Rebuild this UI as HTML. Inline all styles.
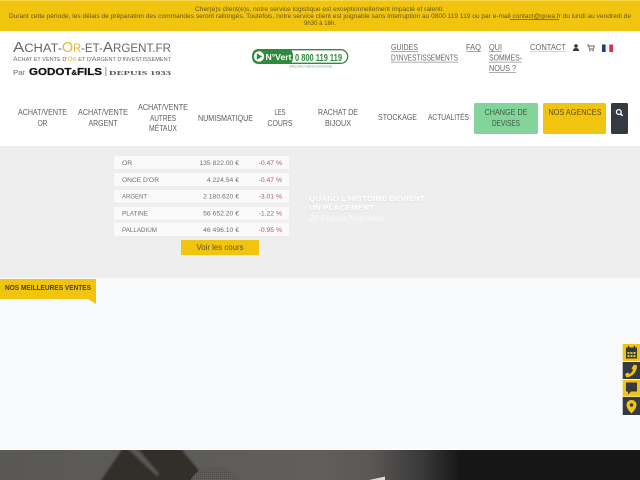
<!DOCTYPE html>
<html lang="fr">
<head>
<meta charset="utf-8">
<title>Achat-Or-et-Argent.fr</title>
<style>
html,body{margin:0;padding:0;width:640px;height:480px;overflow:hidden;background:#fff}
svg{display:block;filter:blur(.35px)}
text{font-family:"Liberation Sans",sans-serif;white-space:pre}
.nav{font-size:8.6px;fill:#5c5c5c}
.top{font-size:6.2px;fill:#63581a}
.lnk{font-size:8.4px;fill:#666}
.row{font-size:6.8px;fill:#707070}
.pct{font-size:6.8px;fill:#b5566a}
</style>
</head>
<body>
<svg xmlns="http://www.w3.org/2000/svg" width="640" height="480" viewBox="0 0 640 480">
<defs>
<linearGradient id="ph" x1="0" x2="1" y1="0" y2="0">
<stop offset="0" stop-color="#5a5855"/><stop offset=".5" stop-color="#615e5b"/><stop offset=".58" stop-color="#5a5755"/><stop offset=".66" stop-color="#393939"/><stop offset=".72" stop-color="#161616"/><stop offset="1" stop-color="#161616"/>
</linearGradient>
<filter id="sh" x="-10%" y="-50%" width="120%" height="200%"><feGaussianBlur stdDeviation="1.2"/></filter>
<filter id="soft" x="-10%" y="-10%" width="120%" height="120%"><feGaussianBlur stdDeviation="1"/></filter>
<clipPath id="phc"><rect x="0" y="450" width="640" height="30"/></clipPath>
<pattern id="dots" width="2" height="2" patternUnits="userSpaceOnUse"><rect width="2" height="2" fill="#5f5d5b"/><rect width="1" height="1" fill="#4e4d4b"/></pattern>
</defs>

<!-- top notice -->
<rect width="640" height="31" fill="#f1c40f"/>
<rect width="640" height="1" fill="#f7d84a"/>
<text class="top" x="195" y="11" textLength="249" lengthAdjust="spacingAndGlyphs">Cher(e)s client(e)s, notre service logistique est exceptionnellement impacté et ralenti.</text>
<text class="top" x="9" y="18" textLength="622" lengthAdjust="spacingAndGlyphs">Durant cette période, les délais de préparation des commandes seront rallongés. Toutefois, notre service client est joignable sans interruption au 0800 119 119 ou par e-mail contact@goea.fr du lundi au vendredi de</text>
<rect x="510" y="19" width="49" height=".7" fill="#5a4f12"/>
<text class="top" x="304" y="25" textLength="32" lengthAdjust="spacingAndGlyphs">9h30 à 18h.</text>

<!-- logo -->
<text x="13" y="52" font-size="15" fill="#666" textLength="49" lengthAdjust="spacingAndGlyphs">A<tspan font-size="11.5">CHAT-</tspan></text>
<text x="62" y="52" font-size="15" fill="#e0b92c" textLength="19" lengthAdjust="spacingAndGlyphs">O<tspan font-size="11.5">R</tspan></text>
<text x="81" y="52" font-size="15" fill="#666" textLength="90" lengthAdjust="spacingAndGlyphs"><tspan font-size="11.5">-ET-</tspan>A<tspan font-size="11.5">RGENT.FR</tspan></text>
<text x="13" y="61" font-size="6.6" fill="#666" textLength="158" lengthAdjust="spacingAndGlyphs">A<tspan font-size="5.4">CHAT ET VENTE D'</tspan><tspan fill="#e0b92c">O<tspan font-size="5.4">R</tspan></tspan><tspan font-size="5.4"> ET D'</tspan>A<tspan font-size="5.4">RGENT D'INVESTISSEMENT</tspan></text>
<text x="13" y="75" font-size="7.5" fill="#666" textLength="12" lengthAdjust="spacingAndGlyphs">Par</text>
<text x="29" y="75" font-size="10.5" font-weight="700" fill="#111" stroke="#111" stroke-width=".25" textLength="73" lengthAdjust="spacingAndGlyphs">GODOT<tspan font-size="7">&amp;</tspan>FILS</text>
<rect x="105.500" y="67" width=".8" height="9" fill="#777"/>
<text x="109" y="75" font-size="6" font-weight="700" fill="#555" style='font-family:"Liberation Serif",serif' textLength="62" lengthAdjust="spacingAndGlyphs">DEPUIS 1933</text>

<!-- N° Vert -->
<rect x="252.700" y="49.700" width="95" height="13.600" rx="6.800" fill="#fff" stroke="#2f8a3c" stroke-width="1.300"/>
<path d="M259 49h29q5 0 5 7.500t-5 7.500h-29q-7 0-7-7.500t7-7.500z" fill="#2f8a3c"/>
<circle cx="259" cy="56.500" r="5.200" fill="#fff"/>
<path d="M256.800 53.300l5.400 3.200-5.400 3.200z" fill="#2f8a3c"/>
<text x="265.500" y="60" font-size="8.500" font-weight="700" fill="#fff" textLength="26" lengthAdjust="spacingAndGlyphs">N°Vert</text>
<text x="295" y="60.800" font-size="10.500" font-weight="700" fill="#2f8a3c" textLength="47" lengthAdjust="spacingAndGlyphs">0 800 119 119</text>
<text x="289" y="67.500" font-size="2.800" fill="#4a9a55" textLength="43" lengthAdjust="spacingAndGlyphs">APPEL GRATUIT DEPUIS UN POSTE FIXE</text>

<!-- top links -->
<text class="lnk" x="391" y="50" textLength="27" lengthAdjust="spacingAndGlyphs">GUIDES</text>
<rect x="391" y="51.300" width="27" height=".6" fill="#777"/>
<text class="lnk" x="391" y="60.500" textLength="67" lengthAdjust="spacingAndGlyphs">D'INVESTISSEMENTS</text>
<rect x="391" y="61.800" width="67" height=".6" fill="#777"/>
<text class="lnk" x="466" y="50" textLength="15" lengthAdjust="spacingAndGlyphs">FAQ</text>
<rect x="466" y="51.300" width="15" height=".6" fill="#777"/>
<text class="lnk" x="489" y="50" textLength="13" lengthAdjust="spacingAndGlyphs">QUI</text>
<rect x="489" y="51.300" width="13" height=".6" fill="#777"/>
<text class="lnk" x="489" y="60.500" textLength="33" lengthAdjust="spacingAndGlyphs">SOMMES-</text>
<rect x="489" y="61.800" width="33" height=".6" fill="#777"/>
<text class="lnk" x="489" y="71" textLength="27" lengthAdjust="spacingAndGlyphs">NOUS ?</text>
<rect x="489" y="72.300" width="27" height=".6" fill="#777"/>
<text class="lnk" x="530" y="50" textLength="36" lengthAdjust="spacingAndGlyphs">CONTACT</text>
<rect x="530" y="51.300" width="36" height=".6" fill="#bbb"/>

<!-- user, cart, flag -->
<circle cx="576" cy="46" r="1.800" fill="#333"/>
<path d="M573 51q0-3 3-3t3 3z" fill="#333"/>
<path d="M587 45h1.500l1 4h4l.8-3h-5.300" fill="none" stroke="#666" stroke-width=".9"/>
<circle cx="590" cy="50.500" r=".8" fill="#666"/><circle cx="593" cy="50.500" r=".8" fill="#666"/>
<rect x="602" y="44.500" width="3.700" height="7.500" fill="#1f3a8a"/>
<rect x="605.700" y="44.500" width="3.600" height="7.500" fill="#f4f4f4"/>
<rect x="609.300" y="44.500" width="3.700" height="7.500" fill="#d0344a"/>

<!-- nav -->
<g class="nav" text-anchor="middle">
<text x="42.500" y="115" textLength="49" lengthAdjust="spacingAndGlyphs">ACHAT/VENTE</text>
<text x="42.500" y="126" textLength="10" lengthAdjust="spacingAndGlyphs">OR</text>
<text x="103" y="115" textLength="50" lengthAdjust="spacingAndGlyphs">ACHAT/VENTE</text>
<text x="103" y="126" textLength="29" lengthAdjust="spacingAndGlyphs">ARGENT</text>
<text x="163" y="110" textLength="50" lengthAdjust="spacingAndGlyphs">ACHAT/VENTE</text>
<text x="163" y="121" textLength="26" lengthAdjust="spacingAndGlyphs">AUTRES</text>
<text x="163" y="131" textLength="28" lengthAdjust="spacingAndGlyphs">MÉTAUX</text>
<text x="225.500" y="121" textLength="55" lengthAdjust="spacingAndGlyphs">NUMISMATIQUE</text>
<text x="280" y="115" textLength="11" lengthAdjust="spacingAndGlyphs">LES</text>
<text x="280" y="126" textLength="25" lengthAdjust="spacingAndGlyphs">COURS</text>
<text x="338" y="115" textLength="40" lengthAdjust="spacingAndGlyphs">RACHAT DE</text>
<text x="338" y="126" textLength="26" lengthAdjust="spacingAndGlyphs">BIJOUX</text>
<text x="397.500" y="120" textLength="39" lengthAdjust="spacingAndGlyphs">STOCKAGE</text>
<text x="448.500" y="120" textLength="41" lengthAdjust="spacingAndGlyphs">ACTUALITÉS</text>
</g>
<rect x="474" y="103" width="64" height="31" rx="1.500" fill="#83d49b"/>
<g class="nav" text-anchor="middle" style="fill:#44584a">
<text x="506" y="115" textLength="43" lengthAdjust="spacingAndGlyphs">CHANGE DE</text>
<text x="506" y="126" textLength="28" lengthAdjust="spacingAndGlyphs">DEVISES</text>
</g>
<rect x="543" y="103" width="63" height="31" rx="1.500" fill="#f1c40f"/>
<text class="nav" style="fill:#5a4f12" x="575" y="115" text-anchor="middle" textLength="53" lengthAdjust="spacingAndGlyphs">NOS AGENCES</text>
<rect x="611" y="103" width="17" height="31" rx="1.500" fill="#343a40"/>
<circle cx="618.800" cy="112" r="2.400" fill="none" stroke="#fff" stroke-width="1.300"/>
<path d="M620.600 113.800l2 2" stroke="#fff" stroke-width="1.500"/>

<!-- hero -->
<rect x="0" y="146" width="640" height="132" fill="#eeeeee"/>
<g fill="#fafafa">
<rect x="114" y="156" width="175" height="13"/>
<rect x="114" y="173" width="175" height="13"/>
<rect x="114" y="190" width="175" height="12.500"/>
<rect x="114" y="207" width="175" height="12.500"/>
<rect x="114" y="223" width="175" height="13"/>
</g>
<text class="row" x="122" y="165">OR</text>
<text class="row" x="122" y="182" textLength="37" lengthAdjust="spacingAndGlyphs">ONCE D'OR</text>
<text class="row" x="122" y="198.500" textLength="25" lengthAdjust="spacingAndGlyphs">ARGENT</text>
<text class="row" x="122" y="215.500" textLength="26" lengthAdjust="spacingAndGlyphs">PLATINE</text>
<text class="row" x="122" y="232" textLength="35" lengthAdjust="spacingAndGlyphs">PALLADIUM</text>
<g class="row" text-anchor="end">
<text x="239" y="165">135 822.00 €</text>
<text x="239" y="182">4 224.54 €</text>
<text x="239" y="198.500">2 180.620 €</text>
<text x="239" y="215.500">56 652.20 €</text>
<text x="239" y="232">46 496.10 €</text>
</g>
<g class="pct" text-anchor="end">
<text x="282" y="165">-0.47 %</text>
<text x="282" y="182">-0.47 %</text>
<text x="282" y="198.500">-3.01 %</text>
<text x="282" y="215.500">-1.22 %</text>
<text x="282" y="232">-0.95 %</text>
</g>
<rect x="181" y="240" width="78" height="15" rx="1" fill="#f1c40f"/>
<text x="220" y="250" font-size="8.500" fill="#5f5520" text-anchor="middle" textLength="47" lengthAdjust="spacingAndGlyphs">Voir les cours</text>

<g filter="url(#sh)" fill="#dcdcdc" font-weight="700" font-size="7.500">
<text x="309" y="202" textLength="116" lengthAdjust="spacingAndGlyphs">QUAND L'HISTOIRE DEVIENT</text>
<text x="309" y="211" textLength="65" lengthAdjust="spacingAndGlyphs">UN PLACEMENT</text>
</g>
<g fill="#ffffff" font-size="7.500">
<text x="309" y="201" font-weight="700" textLength="116" lengthAdjust="spacingAndGlyphs">QUAND L'HISTOIRE DEVIENT</text>
<text x="309" y="210" font-weight="700" textLength="65" lengthAdjust="spacingAndGlyphs">UN PLACEMENT</text>
<text x="309" y="221" font-size="8.500" fill="#fbfbfb" textLength="76" lengthAdjust="spacingAndGlyphs">20 Francs Napoléon</text>
</g>

<!-- products section -->
<rect x="0" y="278" width="640" height="171" fill="#f8f9fa"/>
<path d="M0 279h96v25l-8-5H0z" fill="#f1c40f"/>
<text x="5" y="290" font-size="7.300" font-weight="700" fill="#4a4214" textLength="86" lengthAdjust="spacingAndGlyphs">NOS MEILLEURES VENTES</text>

<!-- floating side -->
<rect x="622.700" y="344" width="17.300" height="17" fill="#f1c40f"/>
<rect x="622.700" y="362" width="17.300" height="17" fill="#343a40"/>
<rect x="622.700" y="380" width="17.300" height="16.500" fill="#f1c40f"/>
<rect x="622.700" y="397" width="17.300" height="18" fill="#343a40"/>
<path d="M626 347.500h11v11h-11z" fill="#343a40"/>
<rect x="628" y="346" width="1.300" height="2.500" fill="#343a40"/><rect x="633.700" y="346" width="1.300" height="2.500" fill="#343a40"/>
<g fill="#f1c40f"><rect x="627.500" y="352" width="2" height="2"/><rect x="630.500" y="352" width="2" height="2"/><rect x="633.500" y="352" width="2" height="2"/><rect x="627.500" y="355" width="2" height="2"/><rect x="630.500" y="355" width="2" height="2"/><rect x="633.500" y="355" width="2" height="2"/></g>
<path d="M634 364.500l3 1c0 6-4 11-10.500 12l-1.500-3.500 3-1.500 1.300 1.500c1.800-1 3.200-2.500 3.800-4.300l-1.600-1.200z" fill="#f1c40f"/>
<path d="M626 382.500h11v9h-6l-3 3v-3h-2z" fill="#343a40"/>
<path d="M631.500 400c-3 0-5 2.200-5 5 0 3 3 6.500 5 8.500 2-2 5-5.500 5-8.500 0-2.800-2-5-5-5z" fill="#f1c40f"/>
<circle cx="631.500" cy="405" r="1.700" fill="#343a40"/>

<!-- bottom photo -->
<rect x="0" y="449" width="640" height="1" fill="#fff"/>
<rect x="0" y="450" width="640" height="30" fill="url(#ph)"/>
<g clip-path="url(#phc)">
<g filter="url(#soft)">
<path d="M123 448h57l17 20 8 14H100z" fill="#322d2c"/>
<path d="M127 448l30 28 2-2-22-26z" fill="#5a5654"/>
</g>
<path d="M190 482c3-9 12-15 24-15 13 0 23 7 30 15z" fill="url(#dots)"/>
<path d="M369 480l16-3.500V480z" fill="#d8d8d6"/>
</g>
</svg>
</body>
</html>
